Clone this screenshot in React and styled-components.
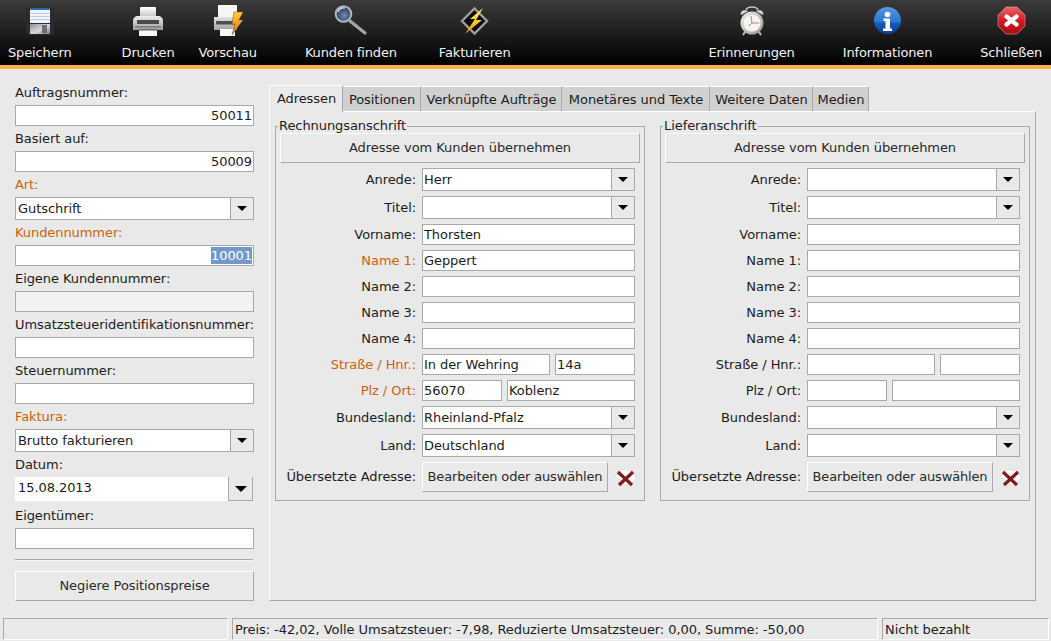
import React from 'react';
import styled, { createGlobalStyle } from 'styled-components';

const GlobalStyle = createGlobalStyle`
  html, body {
    margin: 0;
    padding: 0;
    height: 100%;
    overflow: hidden;
    background: #e9e9e9;
  }
  body {
    font-family: "DejaVu Sans", sans-serif;
    font-size: 13px;
    letter-spacing: -0.07px;
    color: #1c1c1c;
  }
`;

const Window = styled.div`
  width: 1051px;
  height: 641px;
  display: flex;
  flex-direction: column;
  background: #e9e9e9;
`;

const Toolbar = styled.div`
  height: 65px;
  flex: none;
  display: flex;
  padding-left: 8px;
  background: linear-gradient(#3b3b3b, #000);
  border-bottom: 4px solid #ffad4d;
`;

const ToolButton = styled.div`
  display: flex;
  flex-direction: column;
  align-items: center;
  margin-left: ${p => p.$gap || 0}px;
  padding-top: 4px;
  color: #f2f2f2;
  white-space: nowrap;
`;

const ToolIcon = styled.svg`
  width: 34px;
  height: 34px;
  display: block;
`;

const ToolLabel = styled.span`
  margin-top: 7px;
  line-height: 16px;
  letter-spacing: -0.15px;
`;

const Main = styled.div`
  flex: 1;
  display: flex;
  padding: 11px 15px 0;
  gap: 15px;
  min-height: 0;
`;

const Sidebar = styled.div`
  width: 239px;
  flex: none;
  display: flex;
  flex-direction: column;
`;

const SideLabel = styled.div`
  height: 25px;
  line-height: 25px;
  color: ${p => (p.$required ? '#c9620c' : '#1c1c1c')};
`;

const Field = styled.div`
  box-sizing: border-box;
  height: 21px;
  flex: ${p => (p.$width ? `0 0 ${p.$width}px` : 'none')};
  min-width: 0;
  line-height: 19px;
  padding: 0 1px 0 2px;
  border: 1px solid #a9a9a9;
  background: ${p => (p.$disabled ? '#f2f2f2' : '#fff')};
  text-align: ${p => (p.$right ? 'right' : 'left')};
  white-space: nowrap;
  overflow: hidden;
`;

const Selected = styled.span`
  background: #7299c9;
  color: #fff;
  display: inline-block;
  line-height: 17px;
`;

const ComboBox = styled.div`
  box-sizing: border-box;
  height: 23px;
  flex: none;
  display: flex;
  border: 1px solid #a9a9a9;
  background: #fff;
`;

const ComboText = styled.div`
  flex: 1;
  line-height: 21px;
  padding-left: 2px;
  white-space: nowrap;
`;

const ComboArrow = styled.div`
  width: 22px;
  flex: none;
  display: flex;
  align-items: center;
  justify-content: center;
  background: #e9e9e9;
  border-left: 1px solid #a9a9a9;
  &::after {
    content: '';
    border-style: solid;
    border-width: 5px 5px 0;
    border-color: #000 transparent transparent;
  }
`;

const DatePicker = styled.div`
  height: 24px;
  width: 238px;
  flex: none;
  display: flex;
  background: #fff;
  margin-bottom: 2px;
`;

const DateText = styled.div`
  flex: 1;
  padding-left: 3px;
  line-height: 22px;
`;

const DateArrow = styled.div`
  width: 23px;
  flex: none;
  display: flex;
  align-items: center;
  justify-content: center;
  background: #e9e9e9;
  border-left: 1px solid #a9a9a9;
  border-right: 1px solid #a9a9a9;
  border-bottom: 1px solid #a9a9a9;
  &::after {
    content: '';
    border-style: solid;
    border-width: 6px 6px 0;
    border-color: #000 transparent transparent;
  }
`;

const Separator = styled.div`
  height: 2px;
  width: 238px;
  flex: none;
  margin: 10px 0;
  background: linear-gradient(#a9a9a9 50%, #f4f4f4 50%);
`;

const Button = styled.div`
  box-sizing: border-box;
  height: 30px;
  flex: none;
  display: flex;
  align-items: center;
  justify-content: center;
  padding-bottom: 2px;
  background: #e9e9e9;
  border: 1px solid;
  border-color: #fff #a9a9a9 #a9a9a9 #fff;
  white-space: nowrap;
  color: #2a2a2a;
`;

const TabArea = styled.div`
  flex: 1;
  display: flex;
  flex-direction: column;
  margin-top: 5px;
  min-width: 0;
`;

const TabBar = styled.div`
  display: flex;
  align-items: flex-end;
  height: 26px;
  flex: none;
`;

const Tab = styled.div`
  box-sizing: border-box;
  width: ${p => p.$width}px;
  height: ${p => (p.$active ? 27 : 25)}px;
  line-height: 25px;
  text-align: center;
  padding-left: ${p => (p.$active ? 1 : 0)}px;
  background: ${p => (p.$active ? '#e9e9e9' : '#d0d0d0')};
  border-top: 1px solid #fff;
  border-left: 1px solid ${p => (p.$active ? '#fff' : 'transparent')};
  border-right: 1px solid #a9a9a9;
  white-space: nowrap;
  position: relative;
  z-index: ${p => (p.$active ? 1 : 0)};
  margin-bottom: ${p => (p.$active ? -1 : 0)}px;
`;

const TabPane = styled.div`
  box-sizing: border-box;
  width: 767px;
  height: 490px;
  display: flex;
  gap: 15px;
  padding: 7px 5px 0;
  border: 1px solid;
  border-color: #fff #a9a9a9 #a9a9a9 #fff;
`;

const Group = styled.fieldset`
  box-sizing: border-box;
  width: 370px;
  height: 382px;
  margin: 0;
  padding: 0 4px;
  border: 1px solid #a9a9a9;
  min-inline-size: 0;
`;

const GroupTitle = styled.legend`
  padding: 0 1px;
  margin-left: -2px;
  line-height: 14px;
`;

const Rows = styled.div`
  display: flex;
  flex-direction: column;
  gap: 5px;
  margin-top: 5px;
  padding: 0 5px;

  ${Field}, ${ComboText} {
    padding-left: 1px;
  }
`;

const Row = styled.div`
  display: grid;
  grid-template-columns: 131px 1fr;
  column-gap: 6px;
  align-items: center;
`;

const RowLabel = styled.div`
  text-align: right;
  white-space: nowrap;
  color: ${p => (p.$required ? '#c9620c' : '#1c1c1c')};
`;

const TranslateLabel = styled(RowLabel)`
  padding-bottom: 2px;
`;

const Pair = styled.div`
  display: flex;
  gap: 5px;

  ${Field}:last-child {
    flex: 1;
  }
`;

const Translate = styled.div`
  display: flex;
  align-items: center;
`;

const TranslateButton = styled(Button)`
  width: 186px;
  letter-spacing: -0.16px;
`;

const DeleteIcon = styled.svg`
  width: 22px;
  height: 22px;
  margin-left: 7px;
  flex: none;
`;

const StatusBar = styled.div`
  height: 23px;
  flex: none;
  display: flex;
  margin-top: 16px;
  padding: 0 2px 0 3px;
`;

const StatusCell = styled.div`
  box-sizing: border-box;
  width: ${p => p.$width}px;
  margin-left: ${p => p.$gap || 0}px;
  height: 22px;
  line-height: 22px;
  padding-left: 2px;
  border: 1px solid;
  border-color: #a9a9a9 #fff #fff #a9a9a9;
  white-space: nowrap;
`;

function FloppyIcon() {
  return (
    <ToolIcon viewBox="0 0 34 34">
      <defs>
        <linearGradient id="floppyLower" x1="0" y1="0" x2="1" y2="1">
          <stop offset="0" stopColor="#8f8f94" />
          <stop offset=".55" stopColor="#d8d8de" />
          <stop offset="1" stopColor="#77777c" />
        </linearGradient>
      </defs>
      <path d="M3 4h28v27H5l-2-2z" fill="#2b2b2d" />
      <rect x="7" y="4" width="20" height="15" fill="#eef2fa" />
      <rect x="7" y="4" width="20" height="2" fill="#2f6aa8" />
      <path d="M8 9.5h18M8 12.5h18M8 15.5h18" stroke="#bccade" />
      <rect x="7" y="20" width="20" height="10" fill="url(#floppyLower)" />
      <rect x="19" y="21" width="5" height="8" fill="#6d6d72" />
    </ToolIcon>
  );
}

function PrinterIcon() {
  return (
    <ToolIcon viewBox="0 0 34 34">
      <defs>
        <linearGradient id="printerBody" x1="0" y1="0" x2="0" y2="1">
          <stop offset="0" stopColor="#efefef" />
          <stop offset="1" stopColor="#9c9c9c" />
        </linearGradient>
        <linearGradient id="printerPaper" x1="0" y1="0" x2="0" y2="1">
          <stop offset="0" stopColor="#fff" />
          <stop offset="1" stopColor="#c4c4c4" />
        </linearGradient>
      </defs>
      <rect x="9" y="3" width="16" height="10" rx="1" fill="url(#printerPaper)" />
      <path d="M2 17c0-3 2-5 5-5h20c3 0 5 2 5 5v9H2z" fill="url(#printerBody)" />
      <rect x="6" y="16" width="22" height="4" fill="#4a4a4a" />
      <rect x="4" y="22" width="26" height="1.5" fill="#7b7b7b" />
      <rect x="8" y="25" width="18" height="7" fill="#f8f8f8" />
      <rect x="8" y="25" width="18" height="1.5" fill="#6c6c6c" />
    </ToolIcon>
  );
}

function PreviewIcon() {
  return (
    <ToolIcon viewBox="0 0 34 34">
      <defs>
        <linearGradient id="boltFill" x1="0" y1="0" x2="0" y2="1">
          <stop offset="0" stopColor="#ffd23c" />
          <stop offset="1" stopColor="#e0700c" />
        </linearGradient>
        <linearGradient id="previewBody" x1="0" y1="0" x2="0" y2="1">
          <stop offset="0" stopColor="#e2e2e2" />
          <stop offset="1" stopColor="#a2a2a2" />
        </linearGradient>
      </defs>
      <rect x="7" y="1" width="19" height="13" fill="#f6f6f6" />
      <path d="M3 13h23v13H3z" fill="url(#previewBody)" />
      <rect x="5" y="17" width="19" height="3.5" fill="#4e4e4e" />
      <rect x="9" y="25" width="15" height="7" fill="#f8f8f8" />
      <path d="M23 8h9l-4 8h4L21 31l3-11h-3z" fill="url(#boltFill)" stroke="#7d4b0e" strokeWidth=".5" />
    </ToolIcon>
  );
}

function SearchIcon() {
  return (
    <ToolIcon viewBox="0 0 34 34">
      <defs>
        <radialGradient id="lensFill" cx=".55" cy=".6" r=".6">
          <stop offset="0" stopColor="#6f8cb2" />
          <stop offset="1" stopColor="#25344c" />
        </radialGradient>
      </defs>
      <path d="M16 17l15 12" stroke="#a6a6a6" strokeWidth="3.2" strokeLinecap="round" />
      <circle cx="9.5" cy="10" r="7.8" fill="url(#lensFill)" stroke="#aeb6c2" strokeWidth="2" />
      <path d="M4 8c1-3 4-4.500 7-4" stroke="#e2e8f2" strokeWidth="1.2" fill="none" />
    </ToolIcon>
  );
}

function InvoiceIcon() {
  return (
    <ToolIcon viewBox="0 0 34 34">
      <defs>
        <linearGradient id="invoiceBolt" x1="0" y1="0" x2="0" y2="1">
          <stop offset="0" stopColor="#fff27a" />
          <stop offset=".55" stopColor="#ffc81e" />
          <stop offset="1" stopColor="#e88a10" />
        </linearGradient>
      </defs>
      <path d="M16.500 4.500L29 17 16.500 29.500 4 17z" fill="#0a0a0a" stroke="#9f9f9f" strokeWidth="2.4" />
      <path d="M25 4L12 15h5L7 30l17-14h-6z" fill="url(#invoiceBolt)" />
    </ToolIcon>
  );
}

function ClockIcon() {
  return (
    <ToolIcon viewBox="0 0 34 34">
      <defs>
        <linearGradient id="clockBody" x1="0" y1="0" x2="1" y2="1">
          <stop offset="0" stopColor="#f6f6f2" />
          <stop offset="1" stopColor="#8f8f88" />
        </linearGradient>
      </defs>
      <path d="M11 6c1-4 11-4 12 0" stroke="#c6c6c6" strokeWidth="1.4" fill="none" />
      <path d="M6 11c-1-4 3-6 7-4zM28 11c1-4-3-6-7-4z" fill="#ddd" stroke="#999" strokeWidth=".5" />
      <path d="M10 28l-2 3M24 28l2 3" stroke="#c0c0c0" strokeWidth="2" />
      <circle cx="17" cy="19" r="11.500" fill="url(#clockBody)" />
      <circle cx="17" cy="19" r="8.800" fill="#f6f5f1" stroke="#c8c8c2" strokeWidth=".6" />
      <path d="M17 19l-1-7M17 19h7" stroke="#c65a5a" strokeWidth=".8" />
      <path d="M17 19l-3 3" stroke="#777" strokeWidth=".8" />
    </ToolIcon>
  );
}

function InfoIcon() {
  return (
    <ToolIcon viewBox="0 0 34 34">
      <defs>
        <linearGradient id="infoFill" x1="0" y1="0" x2="0" y2="1">
          <stop offset="0" stopColor="#5a98e6" />
          <stop offset=".55" stopColor="#2a74d2" />
          <stop offset=".6" stopColor="#155ab8" />
          <stop offset="1" stopColor="#0c3f98" />
        </linearGradient>
      </defs>
      <circle cx="17.500" cy="16.500" r="13.500" fill="url(#infoFill)" />
      <circle cx="17.500" cy="10.500" r="2.800" fill="#fff" />
      <path d="M13.500 14.500h6.500v10h2v2.500H13v-2.500h2.500v-7.500h-2z" fill="#fff" />
    </ToolIcon>
  );
}

function CloseIcon() {
  return (
    <ToolIcon viewBox="0 0 34 34">
      <defs>
        <linearGradient id="closeFill" x1="0" y1="0" x2="0" y2="1">
          <stop offset="0" stopColor="#ef6468" />
          <stop offset=".5" stopColor="#d21c24" />
          <stop offset="1" stopColor="#a80c14" />
        </linearGradient>
      </defs>
      <path d="M12 3h11l8 8v11l-8 8H12l-8-8V11z" fill="url(#closeFill)" stroke="#d9a0a0" strokeWidth=".6" />
      <path d="M12.500 12.500l10 8M22.500 12.500l-10 8" stroke="#fff" strokeWidth="4.200" strokeLinecap="round" />
    </ToolIcon>
  );
}

function RemoveIcon() {
  return (
    <DeleteIcon viewBox="0 0 22 22">
      <path d="M0 10l8-7 11 3 2 7-9 7z" fill="#fff" stroke="#cfcfcf" strokeWidth=".6" />
      <path d="M3 6l14 13M18 6L4 19" stroke="#7f1d1d" strokeWidth="3.200" />
    </DeleteIcon>
  );
}

const tools = [
  { label: 'Speichern', icon: <FloppyIcon />, gap: 0 },
  { label: 'Drucken', icon: <PrinterIcon />, gap: 50 },
  { label: 'Vorschau', icon: <PreviewIcon />, gap: 24 },
  { label: 'Kunden finden', icon: <SearchIcon />, gap: 48 },
  { label: 'Fakturieren', icon: <InvoiceIcon />, gap: 42 },
  { label: 'Erinnerungen', icon: <ClockIcon />, gap: 198 },
  { label: 'Informationen', icon: <InfoIcon />, gap: 48 },
  { label: 'Schließen', icon: <CloseIcon />, gap: 48 },
];

const tabs = [
  { label: 'Adressen', width: 74 },
  { label: 'Positionen', width: 78 },
  { label: 'Verknüpfte Aufträge', width: 141 },
  { label: 'Monetäres und Texte', width: 148 },
  { label: 'Weitere Daten', width: 103 },
  { label: 'Medien', width: 56 },
];

const billing = {
  title: 'Rechnungsanschrift',
  required: true,
  salutation: 'Herr',
  first: 'Thorsten',
  name1: 'Geppert',
  street: 'In der Wehring',
  number: '14a',
  zip: '56070',
  city: 'Koblenz',
  state: 'Rheinland-Pfalz',
  country: 'Deutschland',
};

const shipping = { title: 'Lieferanschrift', required: false };

function Combo({ value }) {
  return (
    <ComboBox>
      <ComboText>{value}</ComboText>
      <ComboArrow />
    </ComboBox>
  );
}

function AddressGroup({ data }) {
  return (
    <Group>
      <GroupTitle>{data.title}</GroupTitle>
      <Button>Adresse vom Kunden übernehmen</Button>
      <Rows>
        <Row><RowLabel>Anrede:</RowLabel><Combo value={data.salutation} /></Row>
        <Row><RowLabel>Titel:</RowLabel><Combo /></Row>
        <Row><RowLabel>Vorname:</RowLabel><Field>{data.first}</Field></Row>
        <Row><RowLabel $required={data.required}>Name 1:</RowLabel><Field>{data.name1}</Field></Row>
        <Row><RowLabel>Name 2:</RowLabel><Field /></Row>
        <Row><RowLabel>Name 3:</RowLabel><Field /></Row>
        <Row><RowLabel>Name 4:</RowLabel><Field /></Row>
        <Row>
          <RowLabel $required={data.required}>Straße / Hnr.:</RowLabel>
          <Pair><Field $width={128}>{data.street}</Field><Field>{data.number}</Field></Pair>
        </Row>
        <Row>
          <RowLabel $required={data.required}>Plz / Ort:</RowLabel>
          <Pair><Field $width={80}>{data.zip}</Field><Field>{data.city}</Field></Pair>
        </Row>
        <Row><RowLabel>Bundesland:</RowLabel><Combo value={data.state} /></Row>
        <Row><RowLabel>Land:</RowLabel><Combo value={data.country} /></Row>
        <Row>
          <TranslateLabel>Übersetzte Adresse:</TranslateLabel>
          <Translate>
            <TranslateButton>Bearbeiten oder auswählen</TranslateButton>
            <RemoveIcon />
          </Translate>
        </Row>
      </Rows>
    </Group>
  );
}

export default function App() {
  return (
    <Window>
      <GlobalStyle />
      <Toolbar>
        {tools.map(t => (
          <ToolButton key={t.label} $gap={t.gap}>
            {t.icon}
            <ToolLabel>{t.label}</ToolLabel>
          </ToolButton>
        ))}
      </Toolbar>
      <Main>
        <Sidebar>
          <SideLabel>Auftragsnummer:</SideLabel>
          <Field $right>50011</Field>
          <SideLabel>Basiert auf:</SideLabel>
          <Field $right>50009</Field>
          <SideLabel $required>Art:</SideLabel>
          <Combo value="Gutschrift" />
          <SideLabel $required>Kundennummer:</SideLabel>
          <Field $right><Selected>10001</Selected></Field>
          <SideLabel>Eigene Kundennummer:</SideLabel>
          <Field $disabled />
          <SideLabel>Umsatzsteueridentifikationsnummer:</SideLabel>
          <Field />
          <SideLabel>Steuernummer:</SideLabel>
          <Field />
          <SideLabel $required>Faktura:</SideLabel>
          <Combo value="Brutto fakturieren" />
          <SideLabel>Datum:</SideLabel>
          <DatePicker>
            <DateText>15.08.2013</DateText>
            <DateArrow />
          </DatePicker>
          <SideLabel>Eigentümer:</SideLabel>
          <Field />
          <Separator />
          <Button>Negiere Positionspreise</Button>
        </Sidebar>
        <TabArea>
          <TabBar>
            {tabs.map((t, i) => <Tab key={t.label} $active={i === 0} $width={t.width}>{t.label}</Tab>)}
          </TabBar>
          <TabPane>
            <AddressGroup data={billing} />
            <AddressGroup data={shipping} />
          </TabPane>
        </TabArea>
      </Main>
      <StatusBar>
        <StatusCell $width={225} />
        <StatusCell $width={646} $gap={4}>Preis: -42,02, Volle Umsatzsteuer: -7,98, Reduzierte Umsatzsteuer: 0,00, Summe: -50,00</StatusCell>
        <StatusCell $width={167} $gap={4}>Nicht bezahlt</StatusCell>
      </StatusBar>
    </Window>
  );
}
